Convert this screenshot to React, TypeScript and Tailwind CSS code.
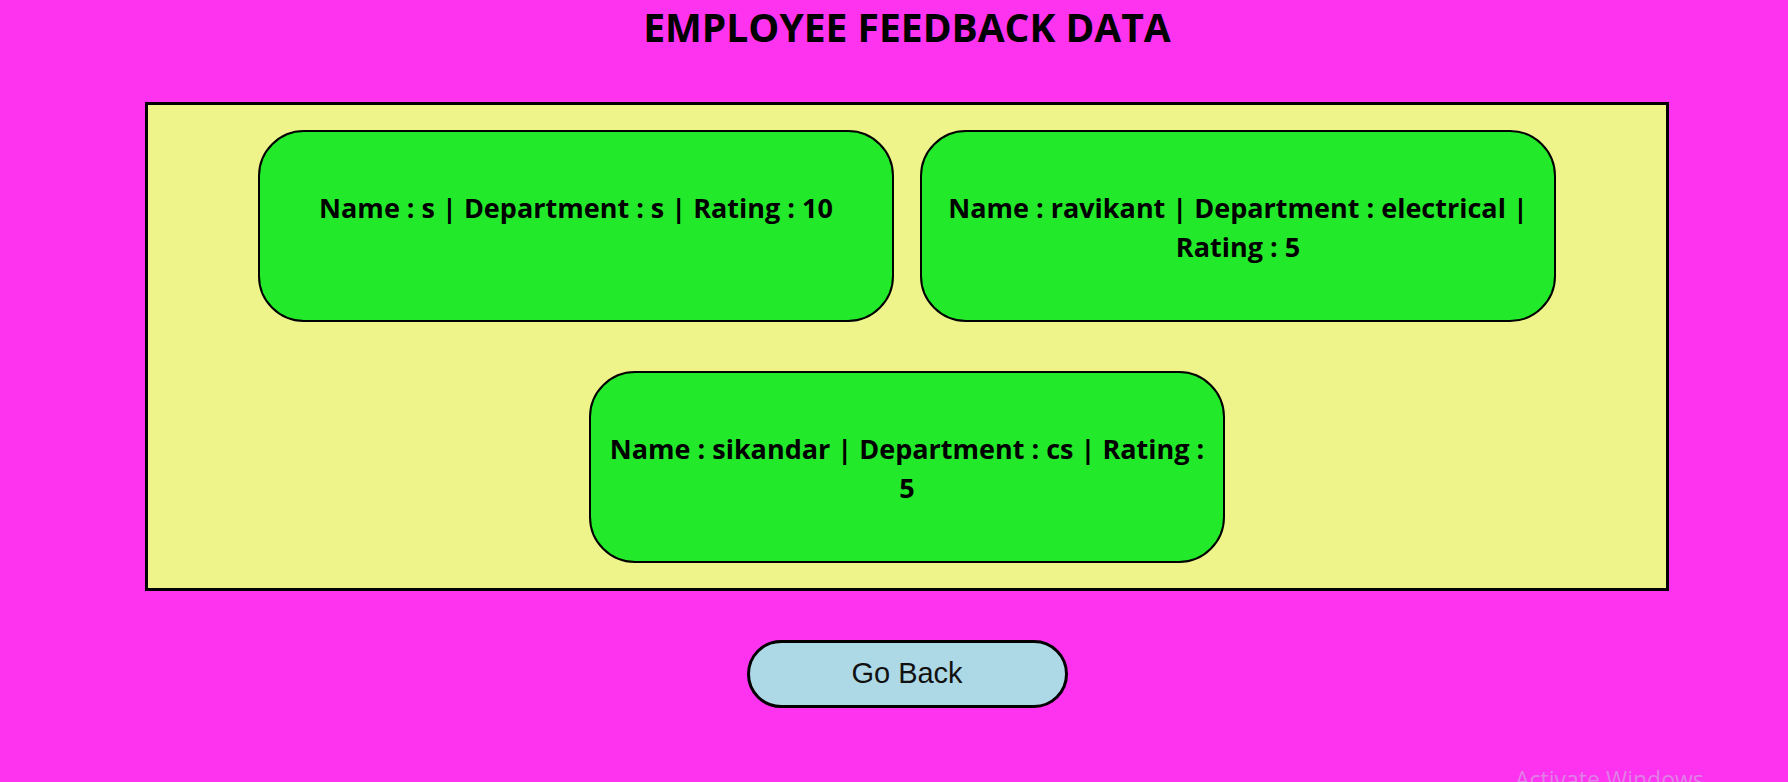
const FEEDBACK = [
  { name: 's', department: 's', rating: 10 },
  { name: 'ravikant', department: 'electrical', rating: 5 },
  { name: 'sikandar', department: 'cs', rating: 5 },
]

function FeedbackCard({ name, department, rating }: { name: string; department: string; rating: number }) {
  return (
    <div className="w-[636px] rounded-[46px] border-2 border-black bg-[#22ea2a] px-[10px] pb-[54px] pt-[56px] text-center text-[27px] font-bold leading-[39px] text-black">
      Name : {name} | Department : {department} | Rating : {rating}
    </div>
  )
}

export default function App() {
  return (
    <div className="relative min-h-screen overflow-hidden bg-[#fd33ef] pl-[26px] font-['Open_Sans',sans-serif]">
      <h1 className="pt-[2px] text-center text-[39px] font-bold leading-[50px] text-black">EMPLOYEE FEEDBACK DATA</h1>

      {/* Feedback list */}
      <div className="mx-[119px] mt-[50px] flex flex-wrap justify-center gap-x-[26px] gap-y-[49px] border-[3px] border-black bg-[#eef48a] py-[25px]">
        {FEEDBACK.map((f) => (
          <FeedbackCard key={f.name} {...f} />
        ))}
      </div>

      <div className="mt-[49px] flex justify-center">
        <button
          type="button"
          className="h-[68px] w-[321px] rounded-full border-[3px] border-black bg-[#add8e6] font-['Liberation_Sans',Arial,sans-serif] text-[29px] text-[#111]"
        >
          Go Back
        </button>
      </div>

      <div className="absolute left-[1515px] top-[764px] whitespace-nowrap text-[23px] leading-[30px] text-[#e07fe6]">
        Activate Windows
      </div>
    </div>
  )
}
